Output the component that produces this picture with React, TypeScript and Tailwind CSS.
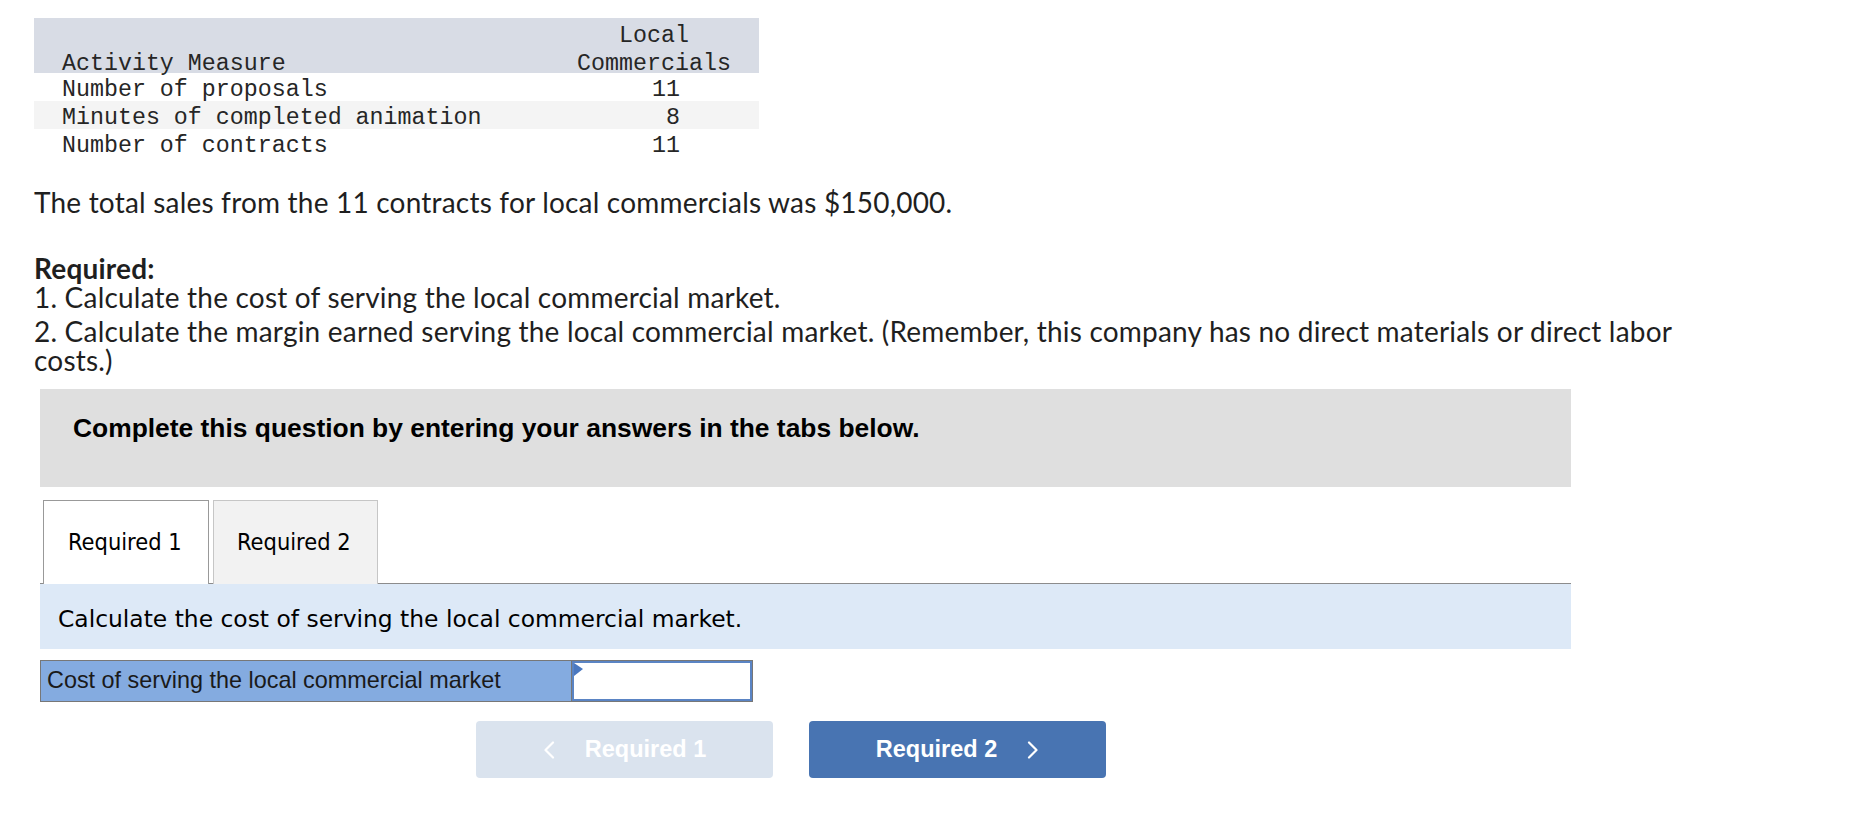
import React from "react";

const Chevron = ({ dir }: { dir: "left" | "right" }) => (
  <svg width="12" height="18" viewBox="0 0 12 18" fill="none" className="shrink-0">
    {dir === "left" ? (
      <path d="M10 1.5 L2.5 9 L10 16.5" stroke="white" strokeWidth="2.2" strokeLinecap="round" strokeLinejoin="round" />
    ) : (
      <path d="M2 1.5 L9.5 9 L2 16.5" stroke="white" strokeWidth="2.2" strokeLinecap="round" strokeLinejoin="round" />
    )}
  </svg>
);

const rows = [
  { label: "Number of proposals", value: "11", stripe: false },
  { label: "Minutes of completed animation", value: "8", stripe: true },
  { label: "Number of contracts", value: "11", stripe: false },
];

export default function App() {
  return (
    <div className="min-h-screen bg-white pl-[34px] pt-[18px] text-[#222]">
      {/* Activity table */}
      <div className="w-[725px] font-['Liberation_Mono',monospace] text-[23.3px] text-[#262626]">
        <div className="flex h-[55px] bg-[#d8dce5]">
          <div className="w-[536px] pl-[28px] pt-[32px] leading-[28px]">Activity Measure</div>
          <div className="w-[168px] pt-[4px] text-center leading-[28px]">
            Local
            <br />
            Commercials
          </div>
        </div>
        {rows.map((r) => (
          <div key={r.label} className={`flex h-[28px] ${r.stripe ? "bg-[#f4f4f4]" : "bg-white"}`}>
            <div className="w-[536px] whitespace-pre pl-[28px] pt-[3px] leading-[28px]">{r.label}</div>
            <div className="w-[110px] whitespace-pre pt-[3px] text-right leading-[28px]">{r.value}</div>
          </div>
        ))}
      </div>

      {/* Body text */}
      <div className="font-['Lato',sans-serif] text-[28px] tracking-[0.2px] text-[#1f1f1f]">
        <p className="mt-[31px] leading-[28px]">The total sales from the 11 contracts for local commercials was $150,000.</p>
        <div className="mt-[38px] leading-[29px]">
          <p className="font-bold">Required:</p>
          <p>1. Calculate the cost of serving the local commercial market.</p>
          <p className="mt-[5px]">
            2. Calculate the margin earned serving the local commercial market. (Remember, this company has no direct
            materials or direct labor
            <br />
            costs.)
          </p>
        </div>
      </div>

      {/* Instruction box */}
      <div className="ml-[6px] mt-[14px] h-[98px] w-[1531px] bg-[#dfdfdf] pl-[33px] pt-[24px]">
        <p className="font-['Liberation_Sans',Arial,sans-serif] text-[26.4px] font-bold leading-[30px] text-black">
          Complete this question by entering your answers in the tabs below.
        </p>
      </div>

      {/* Tabs */}
      <div className="ml-[9px] mt-[13px] flex -mb-px font-['DejaVu_Sans_Condensed','DejaVu_Sans',sans-serif] text-[23.4px] text-black">
        <div className="relative z-10 h-[84px] w-[166px] border border-b-0 border-[#999] bg-white pl-[24px] pt-[26px] leading-[30px]">
          Required 1
        </div>
        <div className="ml-[4px] h-[84px] w-[165px] border border-b-0 border-[#c6c6c6] bg-[#f2f2f2] pl-[23px] pt-[26px] leading-[30px]">
          Required 2
        </div>
      </div>
      <div className="ml-[6px] h-[66px] w-[1531px] border-t border-[#8c8c8c] bg-[#dde9f7] pl-[18px] pt-[20px] font-['DejaVu_Sans',Verdana,sans-serif] text-[23.4px] leading-[30px] text-black">
        Calculate the cost of serving the local commercial market.
      </div>

      {/* Answer row */}
      <div className="ml-[6px] mt-[11px] flex h-[42px] w-[713px] border border-[#777] font-['Liberation_Sans',Arial,sans-serif] text-[23.4px] text-[#1a1a1a]">
        <div className="flex w-[531px] items-center border-r border-[#777] bg-[#84abe0] pl-[6px]">
          Cost of serving the local commercial market
        </div>
        <div className="relative flex-1 border-2 border-[#5a84c4] bg-white">
          <svg width="10" height="13" viewBox="0 0 10 13" className="absolute left-0 top-0">
            <path d="M0 0 L9 6 L0 13 Z" fill="#4a78c0" />
          </svg>
        </div>
      </div>

      {/* Nav buttons */}
      <div className="ml-[442px] mt-[19px] flex gap-[36px] font-['Liberation_Sans',Arial,sans-serif] text-[23.5px] font-bold text-white">
        <div className="flex h-[57px] w-[297px] items-center justify-center gap-[30px] rounded-[4px] bg-[#dae3ee]">
          <Chevron dir="left" />
          <span>Required 1</span>
        </div>
        <div className="flex h-[57px] w-[297px] items-center justify-center gap-[30px] rounded-[4px] bg-[#4874b2]">
          <span>Required 2</span>
          <Chevron dir="right" />
        </div>
      </div>
    </div>
  );
}
